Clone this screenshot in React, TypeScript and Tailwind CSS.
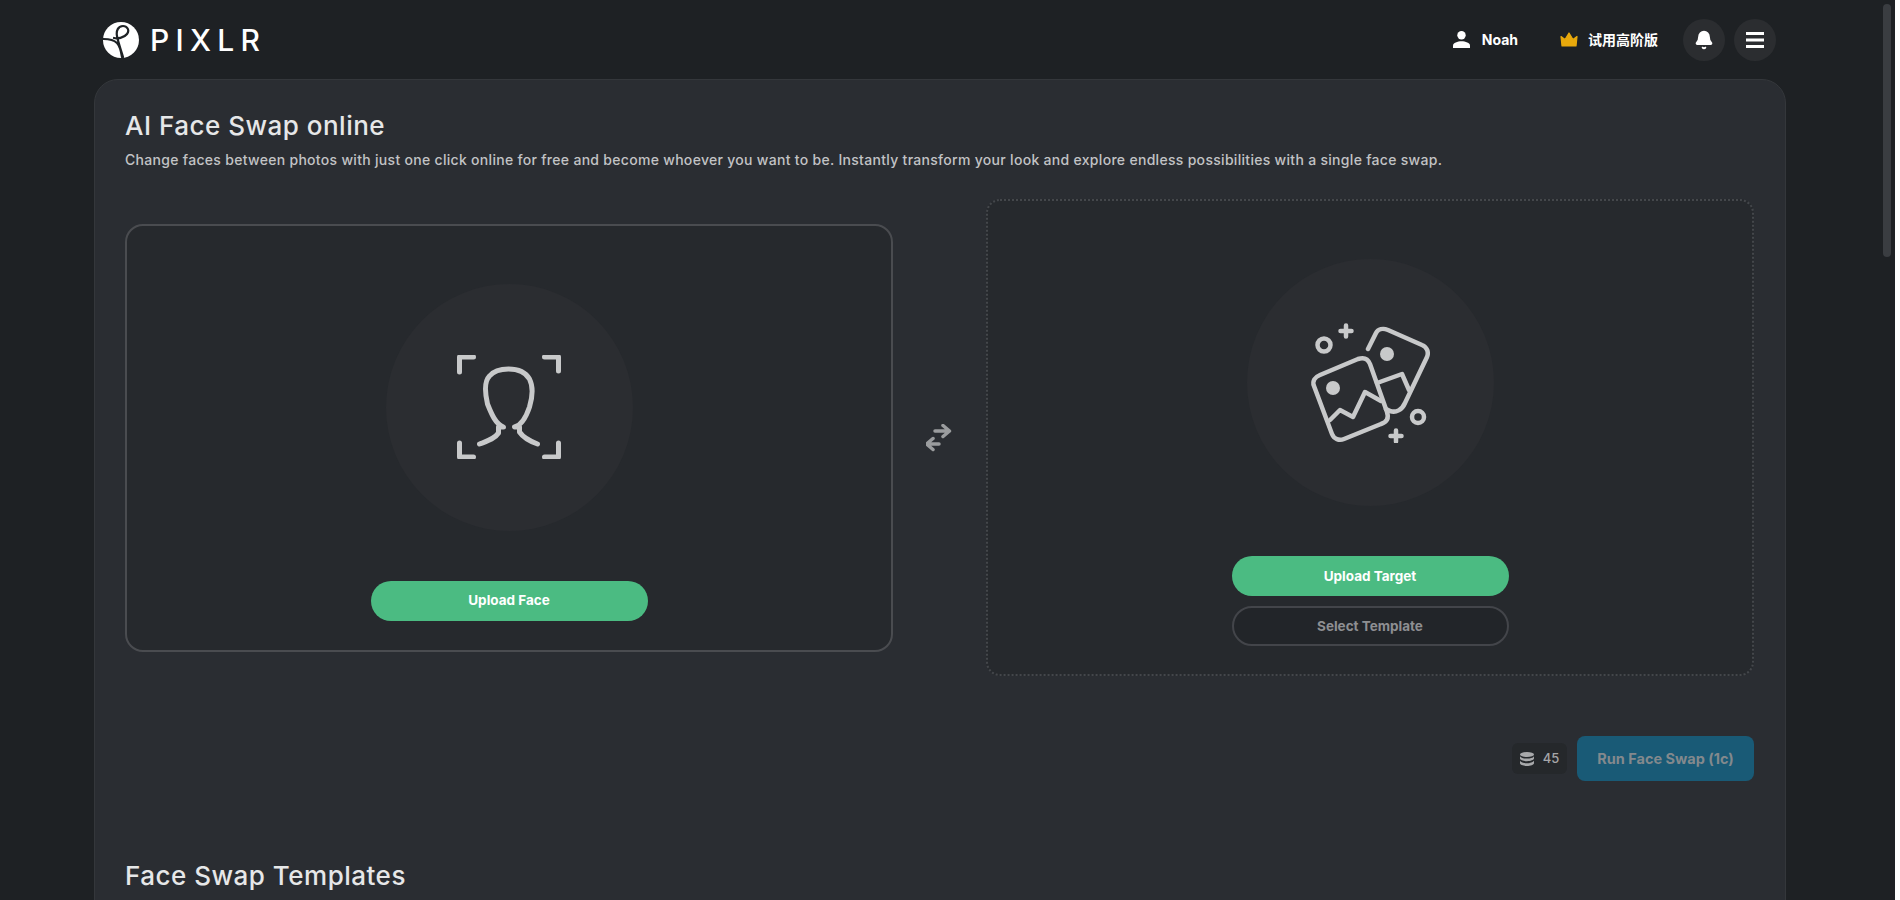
import { Bell } from 'lucide-react';

const font = 'font-["Inter","Noto_Sans_CJK_SC",sans-serif]';

function PixlrLogo() {
  return (
    <svg viewBox="0 0 36 36" className="w-9 h-9">
      <circle cx="18" cy="18" r="18" fill="#fff" />
      <path
        d="M0.5 17C6 17 11 18 14 21C17 24 18 29 19 35M11 16C14 17 21 16 24 12C27 8 24 4 20 4C15 4 13 9 14 14C15 20 18 28 20 35"
        fill="none"
        stroke="#1e2225"
        strokeWidth="2.2"
        strokeLinecap="round"
      />
    </svg>
  );
}

function UserIcon() {
  return (
    <svg viewBox="0 0 17 17" className="w-[17px] h-[17px] mr-[12px]" fill="#fff">
      <circle cx="8.5" cy="4.2" r="4.2" />
      <path d="M0 17V14.5C0 11.8 4.5 10.2 8.5 10.2C12.5 10.2 17 11.8 17 14.5V17Z" />
    </svg>
  );
}

function CrownIcon() {
  return (
    <svg viewBox="0 0 18 15" className="w-[18px] h-[15px] mr-[10px]" fill="#e8a90c">
      <path d="M1 4.5L5 7.5L9 1L13 7.5L17 4.5L16 14H2Z" stroke="#e8a90c" strokeWidth="1.2" strokeLinejoin="round" />
    </svg>
  );
}

function MenuIcon() {
  return (
    <svg viewBox="0 0 18 16" className="w-[18px] h-4" stroke="#fff" strokeWidth="3">
      <path d="M0 1.5H18M0 8H18M0 14.5H18" />
    </svg>
  );
}

function CoinsIcon() {
  return (
    <svg viewBox="0 0 14 14" className="w-[14px] h-[14px]" fill="#a8a9ab">
      <ellipse cx="7" cy="2.5" rx="7" ry="2.5" />
      <path d="M0 4.2C1 6 4 6.6 7 6.6C10 6.6 13 6 14 4.2V6.6C14 8 10.5 9.2 7 9.2C3.5 9.2 0 8 0 6.6Z" />
      <path d="M0 8.8C1 10.5 4 11.2 7 11.2C10 11.2 13 10.5 14 8.8V11.3C14 12.8 10.5 14 7 14C3.5 14 0 12.8 0 11.3Z" />
    </svg>
  );
}

function FaceIcon() {
  return (
    <svg viewBox="37.5 36 104 104" className="w-[104px] h-[104px]" fill="none" stroke="#c8c9ca" strokeWidth="5" strokeLinecap="round" strokeLinejoin="round">
      <path d="M40 53V38H54M125 38H139V52M40 124V138H54M125 138H139V124" />
      <path d="M60 125C68 122 75 120 79 114V108H84C76 105 72 95 68 85C65 72 65 62 70 57C75 51 82 50 89 50C98 50 106 53 110 60C114 68 113 78 110 88C107 97 103 106 95 108H100V113C104 119 110 122 118 125" />
    </svg>
  );
}

function PhotosIcon() {
  return (
    <svg viewBox="20 13 120 120" className="w-[120px] h-[120px]" fill="none" stroke="#c8c9ca" strokeWidth="4.5" strokeLinecap="round" strokeLinejoin="round">
      <path d="M78 39L86 23C88 19 93 18 98 20L132 35C137 37 139 42 137 47L115 93C112 100 106 103 100 101L96 99" />
      <circle cx="97" cy="44" r="7" fill="#c8c9ca" stroke="none" />
      <path d="M87 73L112 64L119 80" />
      <path d="M30 65L68 49C74 47 78 49 80 54L97 102C99 108 97 112 91 114L54 129C49 131 44 129 42 124L24 76C22 71 25 67 30 65Z" />
      <circle cx="43" cy="78" r="7" fill="#c8c9ca" stroke="none" />
      <path d="M40 110L50 100L63 107L75 82L91 91" />
      <circle cx="34" cy="35" r="6.5" />
      <circle cx="128" cy="107" r="6" />
      <path d="M56 15.5V26.5M50.5 21H61.5M106 120.5V131.5M100.5 126H111.5" strokeWidth="4.5" />
    </svg>
  );
}

function SwapIcon() {
  return (
    <svg viewBox="26 24 28 28" className="w-7 h-7" fill="none" stroke="#9a9c9e" strokeWidth="3.5" strokeLinecap="round" strokeLinejoin="round">
      <path d="M35 31H49M43 25.5L49.5 31L43 36.5" />
      <path d="M39 44H27M33 38.5L26.5 44L33 49.5" />
    </svg>
  );
}

function Header() {
  return (
    <header className="flex items-center justify-between h-[79px] pl-[9px] pr-[10px]">
      <div className="flex items-center gap-[11px]">
        <PixlrLogo />
        <span className="text-[30px] font-medium tracking-[0.21em] text-white leading-none">PIXLR</span>
      </div>
      <div className="flex items-center text-white text-[14px] font-bold">
        <UserIcon />
        <span className="mr-[42px]">Noah</span>
        <CrownIcon />
        <span className="mr-[25px] font-semibold">试用高阶版</span>
        <div className="w-[42px] h-[42px] rounded-full bg-[#2b2d30] flex items-center justify-center mr-[9px]">
          <Bell className="w-5 h-5 fill-white" />
        </div>
        <div className="w-[42px] h-[42px] rounded-full bg-[#2b2d30] flex items-center justify-center">
          <MenuIcon />
        </div>
      </div>
    </header>
  );
}

export default function App() {
  return (
    <div className={`h-screen overflow-hidden bg-[#1e2124] flex ${font}`}>
      <div className="flex-1 min-w-0 pl-[94px] pr-[92px]">
        <Header />
        <main className="h-[900px] rounded-t-[24px] bg-[#2a2d32] border border-[#34373b] pt-[30px] pl-[30px] pr-[31px]">
          <h1 className="text-[26px] leading-[32px] tracking-[0.5px] font-medium text-[#e6e7e8]">AI Face Swap online</h1>
          <p className="mt-[8px] text-[14px] leading-[20px] font-medium text-[#c2c3c5] tracking-[0.3px] whitespace-nowrap">
            Change faces between photos with just one click online for free and become whoever you want to be. Instantly transform your look and explore endless possibilities with a single face swap.
          </p>
          <div className="mt-[29px] flex items-center justify-between h-[477px]">
            <div className="w-[768px] h-[428px] border-2 border-[#4a4c50] rounded-[18px] bg-[#26292d] flex flex-col items-center pt-[58px]">
              <div className="w-[247px] h-[247px] rounded-full bg-[#2b2d31] flex items-center justify-center">
                <FaceIcon />
              </div>
              <button className="mt-[50px] w-[277px] h-[40px] rounded-full bg-[#4bbb82] text-white text-[13.5px] font-bold">Upload Face</button>
            </div>
            <SwapIcon />
            <div className="w-[768px] h-[477px] border-2 border-dotted border-[#44474b] rounded-[14px] bg-[#26292d] flex flex-col items-center pt-[58px]">
              <div className="w-[247px] h-[247px] rounded-full bg-[#2b2d31] flex items-center justify-center">
                <PhotosIcon />
              </div>
              <button className="mt-[50px] w-[277px] h-[40px] rounded-full bg-[#4bbb82] text-white text-[13.5px] font-bold">Upload Target</button>
              <button className="mt-[10px] w-[277px] h-[40px] rounded-full border-2 border-[#43454a] bg-[#222529] text-[#8e8f92] text-[13.5px] font-bold">Select Template</button>
            </div>
          </div>
          <div className="mt-[60px] flex justify-end items-center">
            <div className="flex items-center justify-center gap-[9px] w-[55px] h-[31px] rounded-[6px] bg-[#25282b] text-[#a5a6a8] text-[13px] font-medium">
              <CoinsIcon />
              <span>45</span>
            </div>
            <button className="ml-[10px] w-[177px] h-[45px] rounded-[8px] bg-[#195a76] text-[#83898d] text-[14.5px] font-bold">Run Face Swap (1c)</button>
          </div>
          <h2 className="mt-[79px] text-[26px] leading-[32px] tracking-[0.5px] font-medium text-[#e6e7e8]">Face Swap Templates</h2>
        </main>
      </div>
      <div className="w-[17px] pt-[4px] pl-[5px]">
        <div className="w-[8px] h-[253px] rounded-full bg-[#3a3d41]" />
      </div>
      <div className="w-[5px] bg-white" />
    </div>
  );
}
